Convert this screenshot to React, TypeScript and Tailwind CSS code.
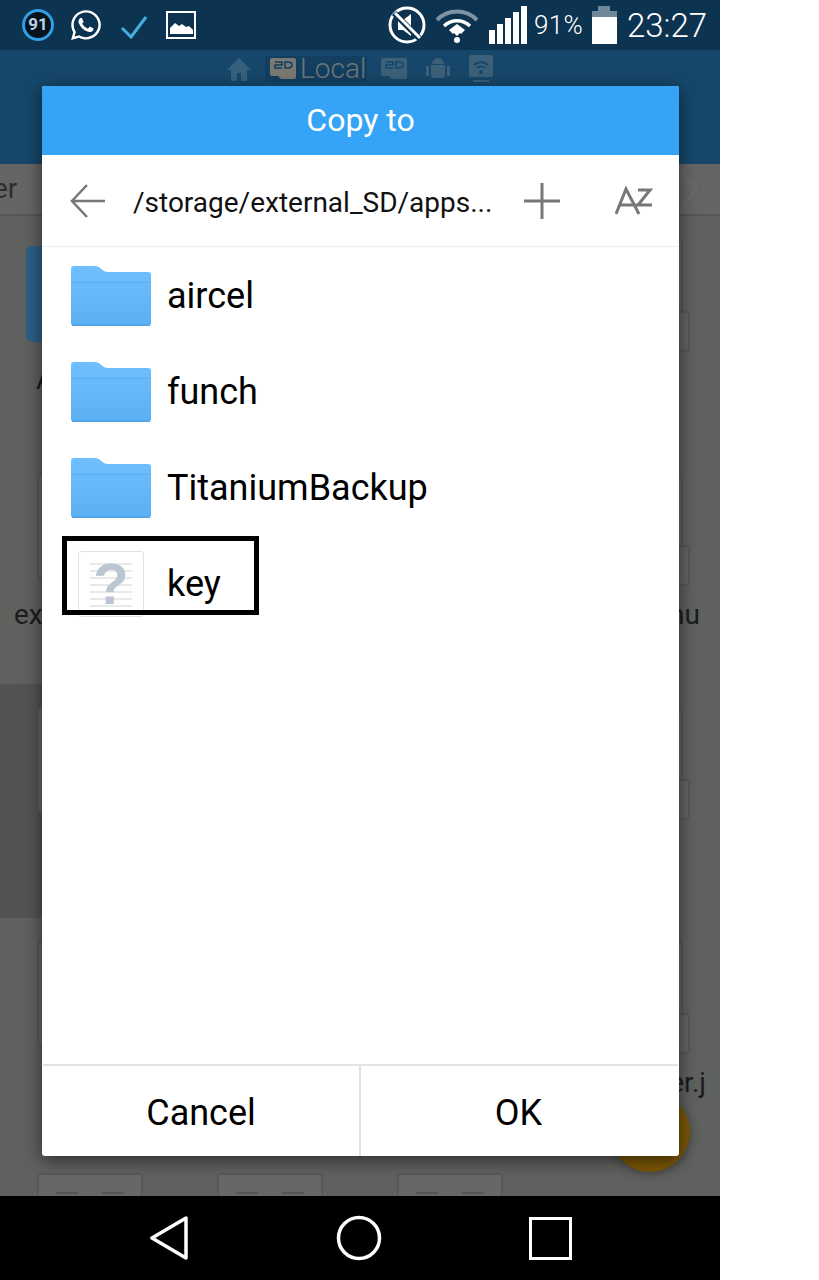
import { FaWhatsapp } from 'react-icons/fa'

const rows = [0, 1, 2, 3, 4]

function FolderIcon() {
  return (
    <svg width="80" height="60" viewBox="0 0 80 60" className="shrink-0">
      <defs>
        <linearGradient id="folderBody" x1="0" y1="0" x2="0" y2="1">
          <stop offset="0" stopColor="#70bffe" />
          <stop offset="1" stopColor="#5bb0f2" />
        </linearGradient>
      </defs>
      <path d="M0 3a3 3 0 0 1 3-3h21q3 0 5 2l4 3q2 1 4 1h40a3 3 0 0 1 3 3v48a3 3 0 0 1-3 3H3a3 3 0 0 1-3-3z" fill="url(#folderBody)" />
      <rect x="0" y="16" width="80" height="1" fill="#5aaef0" />
      <rect x="1" y="58.5" width="78" height="1.5" fill="#52a3e4" />
    </svg>
  )
}

function UnknownFileIcon() {
  return (
    <div className="relative w-[66px] h-[66px] shrink-0 border border-[#dde2e9] rounded-[3px] bg-white">
      <div className="flex flex-col gap-[5px] pt-[11px] px-[11px]">
        {[0, 1, 2, 3, 4, 5, 6].map((i) => (
          <div key={i} className="h-[2px] bg-[#e9e9ec]" />
        ))}
      </div>
      <span className="absolute inset-0 flex items-center justify-center text-[58px] font-bold leading-none text-[#bcc5d2] font-['Liberation_Sans',sans-serif]">
        ?
      </span>
    </div>
  )
}

function SdIcon({ fill, cut }: { fill: string; cut: string }) {
  return (
    <svg width="26" height="24" viewBox="0 0 26 24" className="shrink-0">
      <path d="M2 1h22a2 2 0 0 1 2 2v17a2 2 0 0 1-2 2H11l-3-3H2a2 2 0 0 1-2-2V3a2 2 0 0 1 2-2z" fill={fill} />
      <path d="M5 5h7v3H5v3h7M15 5h3q4 0 4 3t-4 3h-3z" fill="none" stroke={cut} strokeWidth="1.6" />
    </svg>
  )
}

function StatusBar() {
  return (
    <div className="h-[50px] shrink-0 bg-[#0c3350] flex items-center text-white">
      <div className="ml-[22px] w-[32px] h-[32px] rounded-full border-[3px] border-[#2f9fe6] bg-[#06121c] flex items-center justify-center text-[17px] font-bold text-[#b5d3ea] font-['Roboto',sans-serif]">
        91
      </div>
      <FaWhatsapp className="ml-[15px] text-white" size={34} />
      <svg width="30" height="24" viewBox="0 0 30 24" className="ml-[16px] mt-[4px]">
        <path d="M3 13l9 9L27 2" fill="none" stroke="#45aee0" strokeWidth="3" />
      </svg>
      <svg width="30" height="28" viewBox="0 0 30 28" className="ml-[17px]">
        <rect x="1" y="1" width="28" height="26" fill="none" stroke="#fff" strokeWidth="2" />
        <path d="M4 23v-6l5-5 4 3 3-2 4 3 3-1 4 4v4z" fill="#fff" />
      </svg>
      <svg width="38" height="38" viewBox="0 0 38 38" className="ml-[192px]">
        <circle cx="19" cy="19" r="17" fill="none" stroke="#fff" strokeWidth="3" />
        <path d="M10 14h5l8-6v22l-8-6h-5z" fill="#fff" />
        <path d="M6 7l27 27" stroke="#0c3350" strokeWidth="6" />
        <path d="M7 7l25 25" stroke="#fff" strokeWidth="3" />
      </svg>
      <svg width="44" height="38" viewBox="0 0 44 38" className="ml-[9px] mt-[2px]">
        <path d="M2 13a28 28 0 0 1 40 0" fill="none" stroke="#7c93a6" strokeWidth="4" />
        <path d="M9 19a19 19 0 0 1 26 0" fill="none" stroke="#fff" strokeWidth="3.5" />
        <path d="M14 23l8-6 8 6-4 4-1-1-3 3-3-3-1 1z" fill="#fff" />
        <circle cx="22" cy="33" r="3" fill="#fff" />
      </svg>
      <div className="ml-[10px] flex items-end gap-[2px] h-[38px] mt-[6px] self-start">
        <div className="w-[6px] h-[14px] bg-white" />
        <div className="w-[6px] h-[20px] bg-white" />
        <div className="w-[6px] h-[26px] bg-white" />
        <div className="w-[6px] h-[32px] bg-white" />
        <div className="w-[6px] h-[38px] bg-white" />
      </div>
      <span className="ml-[7px] text-[26px] leading-none font-['Roboto',sans-serif] font-light tracking-[0.3px]">91%</span>
      <div className="ml-[9px] mt-[0px] self-start pt-[6px] flex flex-col items-center w-[25px]">
        <div className="w-[12px] h-[5px] bg-[#6f8799]" />
        <div className="w-[25px] h-[6px] bg-[#6f8799]" />
        <div className="w-[25px] h-[27px] bg-white" />
      </div>
      <span className="ml-[10px] text-[33px] leading-none font-['Roboto',sans-serif] font-light">23:27</span>
    </div>
  )
}

function Toolbar() {
  return (
    <div className="h-[114px] shrink-0 bg-[#16476a]">
      <div className="flex items-center h-[38px] pl-[226px]">
        <svg width="26" height="26" viewBox="0 0 26 26">
          <path d="M13 2L1 14h4v11h6v-8h4v8h6V14h4z" fill="#37607c" />
        </svg>
        <div className="ml-[13px] flex items-center h-[26px] w-[102px] bg-[#123f5f] pl-[5px]">
          <SdIcon fill="#797873" cut="#123f5f" />
          <span className="ml-[4px] text-[28px] leading-none text-[#6e7677] font-['Roboto',sans-serif] font-light">Local</span>
        </div>
        <div className="ml-[14px]">
          <SdIcon fill="#3b6078" cut="#16476a" />
        </div>
        <svg width="24" height="26" viewBox="0 0 24 26" className="ml-[19px]">
          <path d="M6 8a6 6 0 0 1 12 0zM5 9h14v11a2 2 0 0 1-2 2H7a2 2 0 0 1-2-2zM0 10h3v10H0zM21 10h3v10h-3z" fill="#3b6078" />
        </svg>
        <svg width="24" height="28" viewBox="0 0 24 28" className="ml-[19px]">
          <rect x="0" y="0" width="24" height="22" rx="2" fill="#3b6078" />
          <path d="M5 10a10 10 0 0 1 14 0M8 13a6 6 0 0 1 8 0" fill="none" stroke="#16476a" strokeWidth="2" />
          <circle cx="12" cy="17" r="2" fill="#16476a" />
          <rect x="4" y="25" width="16" height="2" fill="#3b6078" />
        </svg>
      </div>
    </div>
  )
}

function BackgroundTile({ row, col }: { row: number; col: number }) {
  const selected = row === 2 && col === 0
  const isFolder = row === 0 && col === 0
  const lastCol = col === 3
  const showBox = lastCol && row < 4
  const hideCard = lastCol && row === 4

  return (
    <div className={`relative h-[234px] ${row === 4 ? 'pt-[21px]' : 'pt-[23px]'} ${selected ? 'bg-[#525352]' : ''}`}>
      {isFolder && <div className="ml-[26px] mt-[7px] w-[128px] h-[96px] rounded-[6px] bg-[#2c5f87]" />}
      {!isFolder && !hideCard && (
        <div className={`ml-[37px] h-[106px] w-[106px] rounded-[4px] border-2 border-[#575859] bg-[#676767] overflow-hidden ${row === 4 ? 'pt-[17px]' : ''}`}>
          {row === 4 && (
            <div className="flex justify-between px-[17px]">
              <div className="w-[22px] h-[2px] bg-[#555]" />
              <div className="w-[22px] h-[2px] bg-[#555]" />
            </div>
          )}
        </div>
      )}
      {showBox && (
        <div className="absolute top-[95px] left-[110px] w-[40px] h-[41px] rounded-[4px] border-2 border-[#575859] bg-[#646464]" />
      )}
      {isFolder && <p className="mt-[24px] pl-[36px] text-[28px] leading-none text-[#1c1c1c] font-['Roboto',sans-serif]">A</p>}
      {row === 1 && col === 0 && <p className="mt-[22px] pl-[14px] text-[28px] leading-none text-[#1c1c1c] font-['Roboto',sans-serif]">ex</p>}
      {row === 1 && col === 3 && <p className="mt-[22px] pr-[20px] text-right text-[28px] leading-none text-[#1c1c1c] font-['Roboto',sans-serif]">nu</p>}
      {row === 3 && col === 3 && <p className="mt-[22px] pr-[14px] text-right text-[28px] leading-none text-[#1c1c1c] font-['Roboto',sans-serif]">er.j</p>}
    </div>
  )
}

function BackgroundContent() {
  return (
    <div className="flex-1 min-h-0 bg-[#5f615f] overflow-hidden">
      <div className="h-[52px] bg-[#646564] border-b-2 border-[#555655] flex items-center justify-between pr-[22px]">
        <span className="text-[28px] leading-none text-[#2e2e2e] font-['Roboto',sans-serif] -ml-[7px]">er</span>
        <svg width="18" height="36" viewBox="0 0 18 36">
          <path d="M1 1l16 17L1 35" fill="none" stroke="#6a6b6a" strokeWidth="2" />
        </svg>
      </div>
      <div className="grid grid-cols-4">
        {rows.map((row) =>
          [0, 1, 2, 3].map((col) => <BackgroundTile key={`${row}-${col}`} row={row} col={col} />)
        )}
      </div>
    </div>
  )
}

function NavBar() {
  return (
    <div className="h-[84px] shrink-0 bg-black flex items-center">
      <svg width="40" height="44" viewBox="0 0 40 44" className="ml-[149px]">
        <path d="M3 22L37 2v40z" fill="none" stroke="#fff" strokeWidth="3.5" strokeLinejoin="round" />
      </svg>
      <svg width="46" height="46" viewBox="0 0 46 46" className="ml-[147px]">
        <circle cx="23" cy="23" r="20.5" fill="none" stroke="#fff" strokeWidth="3.5" />
      </svg>
      <div className="ml-[147px] w-[43px] h-[43px] border-[3.5px] border-white" />
    </div>
  )
}

function FolderRow({ name }: { name: string }) {
  return (
    <div className="h-[96px] flex items-center pl-[29px]">
      <FolderIcon />
      <span className="ml-[16px] text-[36px] leading-none text-black font-['Roboto',sans-serif]">{name}</span>
    </div>
  )
}

function CopyDialog() {
  return (
    <div className="absolute left-[42px] top-[86px] w-[637px] h-[1070px] bg-white rounded-[3px] shadow-[0_4px_18px_rgba(0,0,0,0.55)] flex flex-col overflow-hidden">
      <div className="h-[69px] shrink-0 pb-[2px] bg-[#36a4f6] flex items-center justify-center text-white text-[32px] leading-none font-['Roboto',sans-serif]">
        Copy to
      </div>
      <div className="h-[92px] shrink-0 border-b border-[#eeeeee] flex items-center">
        <svg width="38" height="38" viewBox="0 0 38 38" className="ml-[27px]">
          <path d="M36 19H3M18 3L3 19l15 16" fill="none" stroke="#777" strokeWidth="2.5" />
        </svg>
        <span className="ml-[26px] mt-[4px] w-[364px] text-[28px] leading-none text-[#111] whitespace-nowrap font-['Roboto',sans-serif]">
          /storage/external_SD/apps...
        </span>
        <svg width="38" height="38" viewBox="0 0 38 38" className="ml-[26px]">
          <path d="M19 1v36M1 19h36" fill="none" stroke="#777" strokeWidth="3" />
        </svg>
        <svg width="38" height="30" viewBox="0 0 38 30" className="ml-[54px]">
          <path d="M1 28L11 3l13 25M4 19h33M23 4h12L23 19" fill="none" stroke="#777" strokeWidth="3" />
        </svg>
      </div>
      <div className="flex-1 min-h-0 pt-[1px]">
        <FolderRow name="aircel" />
        <FolderRow name="funch" />
        <FolderRow name="TitaniumBackup" />
        <div className="relative h-[96px] flex items-center pl-[36px]">
          <UnknownFileIcon />
          <span className="ml-[23px] text-[36px] leading-none text-black font-['Roboto',sans-serif]">key</span>
          <div className="absolute left-[20px] top-[0px] w-[197px] h-[79px] border-[5px] border-black" />
        </div>
      </div>
      <div className="h-[92px] shrink-0 pt-[3px] mx-[1px] border-t-2 border-[#e3e3e3] flex">
        <div className="w-[318px] -mt-[3px] pt-[3px] border-r-2 border-[#e3e3e3] flex items-center justify-center text-[36px] leading-none text-black font-['Roboto',sans-serif]">
          Cancel
        </div>
        <div className="flex-1 pr-[2px] flex items-center justify-center text-[36px] leading-none text-black font-['Roboto',sans-serif]">
          OK
        </div>
      </div>
    </div>
  )
}

export default function App() {
  return (
    <div className="w-[819px] h-[1280px] bg-white overflow-hidden">
      <div className="relative w-[720px] h-full flex flex-col overflow-hidden">
        <StatusBar />
        <Toolbar />
        <BackgroundContent />
        <NavBar />
        {/* fab sits under the dialog */}
        <div className="absolute left-[610px] top-[1092px] w-[80px] h-[80px] rounded-full bg-[#7b5706] shadow-[0_2px_8px_rgba(0,0,0,0.3)]" />
        <CopyDialog />
      </div>
    </div>
  )
}
